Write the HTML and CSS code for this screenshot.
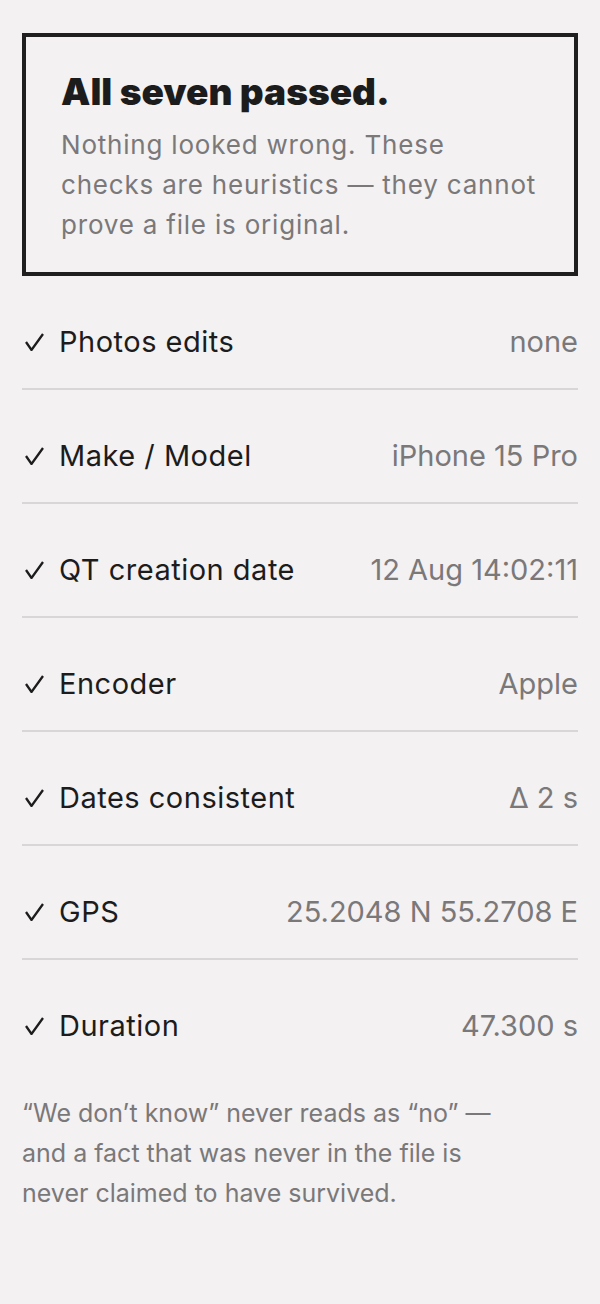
FILE: index.html
```html
<!DOCTYPE html>
<html lang="en">
<head>
    <meta charset="UTF-8">
    <title>Checks</title>
    <meta name="viewport" content="width=device-width, initial-scale=1.0">
    <link rel="stylesheet" href="styles.css">
</head>
<body>
    <section class="verdict">
        <h1>All seven passed.</h1>
        <p>Nothing looked wrong. These checks are heuristics — they cannot prove a file is original.</p>
    </section>

    <ul class="checks">
        <li class="check">
            <span class="label"><svg class="tick" viewBox="0 0 19 18"><path d="M1 9 L6.5 17 L18 1"/></svg>Photos edits</span>
            <span class="value">none</span>
        </li>
        <li class="check">
            <span class="label"><svg class="tick" viewBox="0 0 19 18"><path d="M1 9 L6.5 17 L18 1"/></svg>Make / Model</span>
            <span class="value">iPhone 15 Pro</span>
        </li>
        <li class="check">
            <span class="label"><svg class="tick" viewBox="0 0 19 18"><path d="M1 9 L6.5 17 L18 1"/></svg>QT creation date</span>
            <span class="value">12 Aug 14:02:11</span>
        </li>
        <li class="check">
            <span class="label"><svg class="tick" viewBox="0 0 19 18"><path d="M1 9 L6.5 17 L18 1"/></svg>Encoder</span>
            <span class="value">Apple</span>
        </li>
        <li class="check">
            <span class="label"><svg class="tick" viewBox="0 0 19 18"><path d="M1 9 L6.5 17 L18 1"/></svg>Dates consistent</span>
            <span class="value">Δ 2 s</span>
        </li>
        <li class="check">
            <span class="label"><svg class="tick" viewBox="0 0 19 18"><path d="M1 9 L6.5 17 L18 1"/></svg>GPS</span>
            <span class="value">25.2048 N 55.2708 E</span>
        </li>
        <li class="check">
            <span class="label"><svg class="tick" viewBox="0 0 19 18"><path d="M1 9 L6.5 17 L18 1"/></svg>Duration</span>
            <span class="value">47.300 s</span>
        </li>
    </ul>

    <p class="note">“We don’t know” never reads as “no” — and a fact that was never in the file is never claimed to have survived.</p>
</body>
</html>
```

FILE: styles.css
```css
body {
    margin: 0;
    padding: 33px 22px;
    background-color: #f3f1f2;
    color: #1c1c1c;
    font-family: Inter, "Liberation Sans", sans-serif;
}
.verdict {
    border: 4px solid #1f1f1f;
    padding: 33px 35px 27px 35px;
}
.verdict h1 {
    margin: 0;
    font-size: 37px;
    line-height: 44px;
    font-weight: 900;
    letter-spacing: 0;
}
.verdict p {
    margin: 11px 0 0 0;
    font-size: 26px;
    line-height: 40px;
    color: #7a7879;
    letter-spacing: 0.8px;
}
.checks {
    list-style: none;
    margin: 0;
    padding: 0;
}
.check {
    display: flex;
    justify-content: space-between;
    align-items: center;
    padding: 48px 0 28px 0;
    border-bottom: 2px solid #d8d6d7;
}
.check:last-child {
    border-bottom: none;
}
.label {
    display: flex;
    align-items: center;
    font-size: 29px;
    line-height: 36px;
    letter-spacing: 0.5px;
}
.tick {
    width: 19px;
    height: 18px;
    margin: 0 15px 0 3px;
    fill: none;
    stroke: #1c1c1c;
    stroke-width: 2.3;
}
.value {
    font-size: 29px;
    line-height: 36px;
    color: #7a7879;
}
.note {
    max-width: 475px;
    margin: 21px 0 0 0;
    font-size: 25px;
    line-height: 40px;
    color: #7a7879;
}
```
